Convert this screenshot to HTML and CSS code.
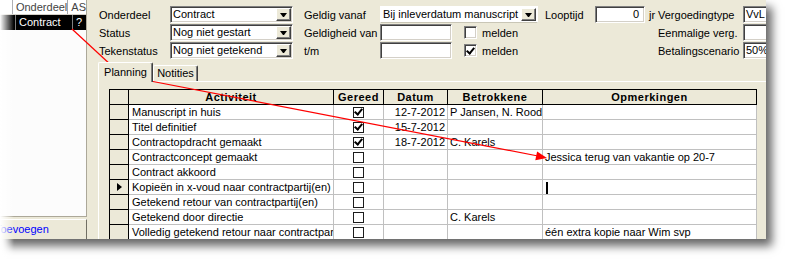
FILE: index.html
```html
<!DOCTYPE html>
<html lang="nl">
<head>
    <meta charset="UTF-8">
    <link rel="stylesheet" href="styles.css">
    <title>Contract - Planning</title>
</head>
<body>
<div class="page">
    <div class="shot">
        <div class="side">
            <div class="list">
                <div class="lrow lhead"><span class="lc0"></span><span class="lc1">Onderdeel</span><span class="lc2">AS</span></div>
                <div class="lrow lsel"><span class="lc0"></span><span class="lc1">Contract</span><span class="lc2">?</span></div>
            </div>
            <div class="addbtn">Toevoegen</div>
        </div>
        <div class="main">
            <div class="frow">
                <span class="w71">Onderdeel</span>
                <div class="combo w123"><span class="val">Contract</span><span class="drop"></span></div>
                <span class="w11"></span>
                <span class="w76">Geldig vanaf</span>
                <div class="combo flat w158"><span class="val">Bij inleverdatum manuscript</span><span class="drop"></span></div>
                <span class="w7"></span>
                <span class="w50">Looptijd</span>
                <div class="field num w50">0</div>
                <span class="unit">jr</span>
                <span class="w85">Vergoedingtype</span>
                <div class="field w40">VvL</div>
            </div>
            <div class="frow">
                <span class="w71">Status</span>
                <div class="combo w123"><span class="val">Nog niet gestart</span><span class="drop"></span></div>
                <span class="w11"></span>
                <span class="w76">Geldigheid van</span>
                <div class="opt w158"><div class="field w72"></div><span class="cb"></span><span class="cbl">melden</span></div>
                <span class="w120"></span>
                <span class="w85">Eenmalige verg.</span>
                <div class="field w40"></div>
            </div>
            <div class="frow">
                <span class="w71">Tekenstatus</span>
                <div class="combo w123"><span class="val">Nog niet getekend</span><span class="drop"></span></div>
                <span class="w11"></span>
                <span class="w76">t/m</span>
                <div class="opt w158"><div class="field w72"></div><span class="cb on"></span><span class="cbl">melden</span></div>
                <span class="w120"></span>
                <span class="w85">Betalingscenario</span>
                <div class="field w40">50% r</div>
            </div>

            <div class="tabs">
                <div class="tab on">Planning</div>
                <div class="tab off">Notities</div>
            </div>
            <div class="panel">
                <div class="grid">
                    <div class="rs hd"></div><div class="hd">Activiteit</div><div class="hd">Gereed</div><div class="hd">Datum</div><div class="hd">Betrokkene</div><div class="hd">Opmerkingen</div>

                    <div class="rs"></div><div class="act">Manuscript in huis</div><div class="ck"><span class="box on"></span></div><div class="dt">12-7-2012</div><div>P Jansen, N. Roodt</div><div></div>
                    <div class="rs"></div><div class="act">Titel definitief</div><div class="ck"><span class="box on"></span></div><div class="dt">15-7-2012</div><div></div><div></div>
                    <div class="rs"></div><div class="act">Contractopdracht gemaakt</div><div class="ck"><span class="box on"></span></div><div class="dt">18-7-2012</div><div>C. Karels</div><div></div>
                    <div class="rs"></div><div class="act">Contractconcept gemaakt</div><div class="ck"><span class="box"></span></div><div class="dt"></div><div></div><div>Jessica terug van vakantie op 20-7</div>
                    <div class="rs"></div><div class="act">Contract akkoord</div><div class="ck"><span class="box"></span></div><div class="dt"></div><div></div><div></div>
                    <div class="rs cur"></div><div class="act">Kopieën in x-voud naar contractpartij(en)</div><div class="ck"><span class="box"></span></div><div class="dt"></div><div></div><div><span class="caret"></span></div>
                    <div class="rs"></div><div class="act">Getekend retour van contractpartij(en)</div><div class="ck"><span class="box"></span></div><div class="dt"></div><div></div><div></div>
                    <div class="rs"></div><div class="act">Getekend door directie</div><div class="ck"><span class="box"></span></div><div class="dt"></div><div>C. Karels</div><div></div>
                    <div class="rs"></div><div class="act">Volledig getekend retour naar contractpartij(en)</div><div class="ck"><span class="box"></span></div><div class="dt"></div><div></div><div>één extra kopie naar Wim svp</div>
                </div>
            </div>
        </div>
    </div>
    <div class="fade"></div>
    <svg class="arrows" width="789" height="263" viewBox="0 0 789 263">
        <line x1="72" y1="29" x2="112" y2="66" stroke="#f00" stroke-width="1.2"/>
        <polygon points="119,73 107.9,68.8 114.1,62.2" fill="#f00"/>
        <line x1="140" y1="79" x2="538" y2="156" stroke="#f00" stroke-width="1.2"/>
        <polygon points="547,158 535.3,160.3 537.1,151.5" fill="#f00"/>
    </svg>
</div>
</body>
</html>
```

FILE: styles.css
```css
* {
  box-sizing: border-box;
}
body {
  margin: 0;
  background: #fff;
  font: 11px "Liberation Sans", Arial, sans-serif;
  color: #000;
}
.page {
  position: relative;
  width: 789px;
  height: 263px;
  overflow: hidden;
}
.shot {
  display: flex;
  width: 766px;
  height: 239px;
  background: #ece9d8;
  box-shadow: 6px 7px 9px rgba(0, 0, 0, 0.6);
  overflow: hidden;
}

/* left list */
.side {
  width: 87px;
  flex: none;
  display: flex;
  flex-direction: column;
}
.list {
  flex: 1;
  background: #fcfcfc;
  border-right: 1px solid #aca899;
  border-bottom: 1px solid #aca899;
  margin-bottom: 2px;
}
.lrow {
  display: flex;
  height: 15px;
  line-height: 14px;
  white-space: nowrap;
}
.lhead {
  background: #fff;
  color: #444;
  border-bottom: 1px solid #d4d0c8;
}
.lsel {
  background: #000;
  color: #fff;
}
.lc0 {
  width: 16px;
  border-right: 1px solid #a7a6aa;
}
.lc1 {
  width: 57px;
  padding-left: 3px;
  border-right: 1px solid #a7a6aa;
}
.lc2 {
  padding-left: 3px;
}
.lsel .lc0, .lsel .lc1 {
  border-color: #808080;
}
.addbtn {
  height: 20px;
  line-height: 18px;
  color: #00f;
  border-top: 1px solid #fff;
  border-right: 1px solid #716f64;
  overflow: hidden;
  white-space: nowrap;
  text-indent: -5px;
}

/* form */
.main {
  flex: 1;
  min-width: 0;
  display: flex;
  flex-direction: column;
  padding: 6px 0 0 12px;
}
.frow {
  display: flex;
  align-items: center;
  height: 17px;
  margin-bottom: 1px;
  white-space: nowrap;
}
.frow > * {
  flex: none;
}
.w7 { width: 7px; }
.w11 { width: 11px; }
.w40 { width: 40px; }
.w50 { width: 50px; }
.w71 { width: 71px; }
.w72 { width: 72px; }
.w76 { width: 76px; }
.w85 { width: 85px; }
.w120 { width: 120px; }
.w123 { width: 123px; }
.w158 { width: 158px; }
.unit {
  width: 13px;
  padding-left: 4px;
}
.combo, .field {
  height: 17px;
  background: #fff;
  border: 1px solid;
  border-color: #808080 #fff #fff #808080;
  box-shadow: inset 1px 1px #404040, inset -1px -1px #d4d0c8;
}
.combo {
  display: flex;
  padding: 1px;
}
.combo.flat {
  border-color: #fff #fff #c9c6b6 #fff;
  box-shadow: none;
}
.val {
  flex: 1;
  padding-left: 1px;
  line-height: 13px;
  overflow: hidden;
}
.drop {
  width: 15px;
  background: #ece9d8;
  border: 1px solid;
  border-color: #fff #404040 #404040 #fff;
  box-shadow: inset -1px -1px #808080;
  display: flex;
  align-items: center;
  justify-content: center;
}
.drop::after {
  content: "";
  width: 1px;
  border-left: 3px solid transparent;
  border-right: 3px solid transparent;
  border-top: 4px solid #000;
}
.field {
  padding: 0 2px;
  line-height: 15px;
  overflow: hidden;
}
.num {
  text-align: right;
  padding-right: 5px;
}
.opt {
  display: flex;
  align-items: center;
}
.cb {
  width: 13px;
  height: 13px;
  margin-left: 12px;
  background: #fff;
  border: 1px solid;
  border-color: #808080 #fff #fff #808080;
  box-shadow: inset 1px 1px #404040, inset -1px -1px #d4d0c8;
  display: flex;
  align-items: center;
  justify-content: center;
}
.cbl {
  margin-left: 5px;
}
.cb.on::after, .box.on::after {
  content: "";
  width: 3px;
  height: 6px;
  border: solid #000;
  border-width: 0 2px 2px 0;
  transform: translateY(-1px) rotate(40deg);
}

/* tabs */
.tabs {
  position: relative;
  z-index: 1;
  display: flex;
  align-items: flex-end;
  height: 19px;
  margin: 2px 0 0 -1px;
}
.tab {
  height: 16px;
  line-height: 15px;
  text-align: center;
  background: #ece9d8;
  border: 1px solid;
  border-bottom: 0;
  border-color: #fff #404040 #fff #fff;
  box-shadow: inset -1px 0 #808080;
  border-radius: 2px 2px 0 0;
}
.tab.on {
  width: 55px;
  height: 20px;
  line-height: 18px;
  margin-bottom: -1px;
}
.tab.off {
  width: 45px;
}
.panel {
  flex: 1;
  min-height: 0;
  margin-left: -1px;
  border-top: 1px solid #fff;
  border-left: 1px solid #fff;
  padding: 7px 0 0 10px;
  overflow: hidden;
}

/* datasheet */
.grid {
  display: grid;
  grid-template-columns: 19px 205px 50px 64px 95px 214px;
  grid-auto-rows: 15px;
  width: max-content;
  border-left: 1px solid #000;
  border-top: 1px solid #000;
}
.grid > div {
  background: #fff;
  border-right: 1px solid #c0c0c0;
  border-bottom: 1px solid #c0c0c0;
  padding: 0 2px;
  line-height: 14px;
  white-space: nowrap;
  overflow: hidden;
}
.grid > .hd {
  background: #ece9d8;
  border-color: #000;
  font-weight: bold;
  text-align: center;
  letter-spacing: 0.5px;
}
.grid > .rs {
  background: #ece9d8;
  border-color: #000;
  padding: 0;
  display: flex;
  align-items: center;
  justify-content: center;
}
.grid > .rs.cur::after {
  content: "";
  border-top: 4px solid transparent;
  border-bottom: 4px solid transparent;
  border-left: 5px solid #000;
}
.grid > .act {
  padding-left: 3px;
}
.grid > .dt {
  text-align: right;
}
.grid > .ck {
  display: flex;
  align-items: center;
  justify-content: center;
}
.box {
  width: 11px;
  height: 11px;
  border: 1px solid #1c1c1c;
  background: #fff;
  display: flex;
  align-items: center;
  justify-content: center;
}
.caret {
  display: inline-block;
  width: 2px;
  height: 12px;
  margin-left: 1px;
  background: #000;
  vertical-align: middle;
}

/* overlays */
.fade {
  position: absolute;
  left: 0;
  top: 0;
  width: 14px;
  height: 100%;
  background: linear-gradient(90deg, #fff, rgba(255, 255, 255, 0));
}
.arrows {
  position: absolute;
  left: 0;
  top: 0;
  pointer-events: none;
}
```
